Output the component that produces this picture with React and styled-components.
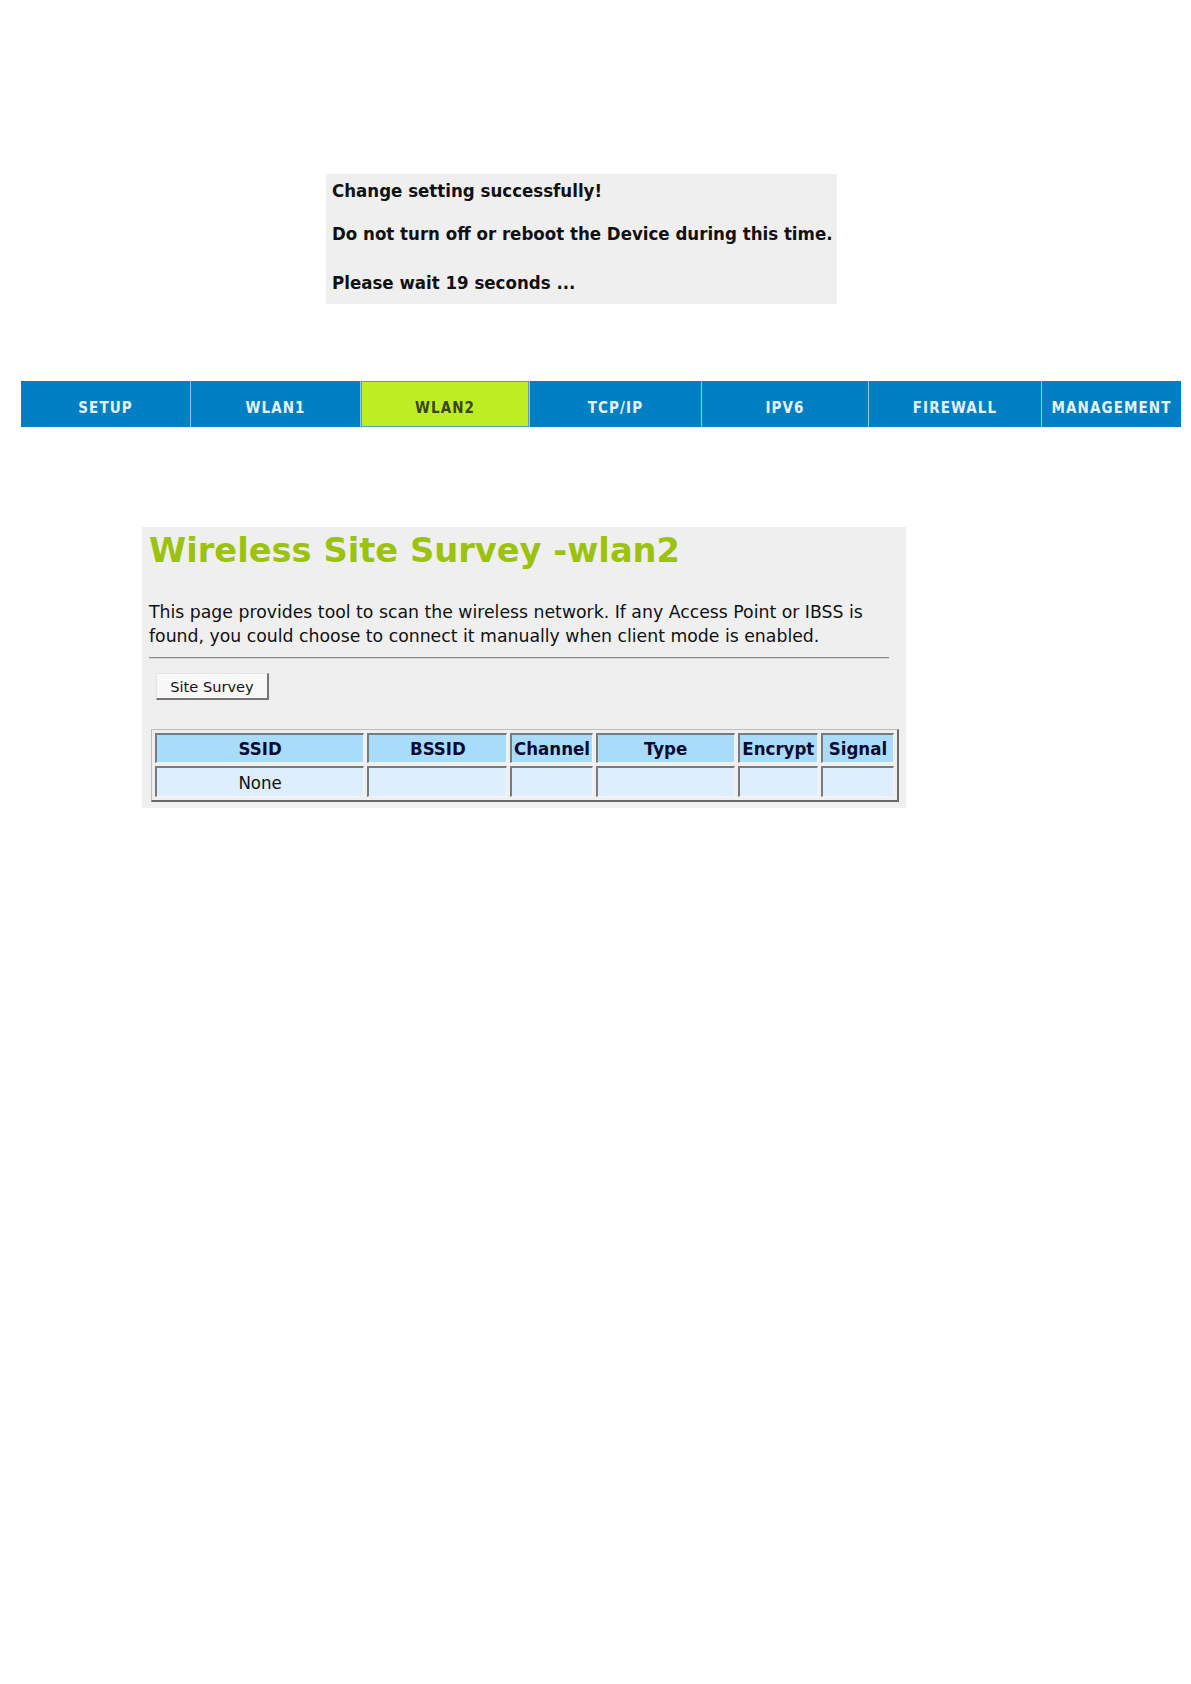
import React from "react";
import styled, { createGlobalStyle } from "styled-components";

const Global = createGlobalStyle`
  html, body { margin: 0; padding: 0; background: #ffffff; }
  body { font-family: "DejaVu Sans", "Liberation Sans", sans-serif; }
`;

const Page = styled.div`
  width: 1191px;
  min-height: 1684px;
  padding-top: 174px;
  box-sizing: border-box;
`;

const Notice = styled.div`
  margin-left: 326px;
  width: 511px;
  height: 130px;
  box-sizing: border-box;
  background: #efefef;
  padding: 7px 0 0 6px;
`;

const NoticeLine = styled.p`
  margin: 0 0 ${(p) => p.$gap || 0}px 0;
  font-family: "DejaVu Sans Condensed", "DejaVu Sans", sans-serif;
  font-stretch: condensed;
  font-weight: bold;
  font-size: 18.5px;
  line-height: 20px;
  color: #111;
  white-space: nowrap;
`;

const Nav = styled.div`
  margin: 77px 0 0 21px;
  width: 1160px;
  height: 46px;
  display: flex;
  background: #0080c2;
`;

const Tab = styled.div`
  width: ${(p) => p.$w}px;
  box-sizing: border-box;
  display: flex;
  align-items: center;
  justify-content: center;
  padding-top: 7px;
  background: ${(p) => (p.$active ? "#bdee24" : "#0080c2")};
  border-left: ${(p) => (p.$first ? "none" : "1px solid #8cc8ee")};
  box-shadow: ${(p) => (p.$active ? "inset 0 0 0 1px #5aa0b8" : "none")};
  color: ${(p) => (p.$active ? "#3a4520" : "#e6f2fb")};
  font-family: "DejaVu Sans Condensed", "DejaVu Sans", sans-serif;
  font-stretch: condensed;
  font-weight: bold;
  font-size: 15px;
  letter-spacing: 1.1px;
  white-space: nowrap;
`;

const Panel = styled.div`
  margin: 100px 0 0 142px;
  width: 764px;
  height: 281px;
  box-sizing: border-box;
  background: #efefef;
  padding: 4px 0 0 7px;
`;

const Title = styled.h1`
  margin: 0;
  font-family: "DejaVu Sans", sans-serif;
  font-weight: bold;
  font-size: 33.7px;
  line-height: 40px;
  color: #9bc20c;
  white-space: nowrap;
`;

const Desc = styled.p`
  margin: 29px 0 0 0;
  width: 745px;
  font-family: "DejaVu Sans", sans-serif;
  font-size: 17.3px;
  line-height: 24px;
  color: #111;
`;

const Rule = styled.hr`
  margin: 9px 0 0 0;
  width: 740px;
  height: 0;
  border: none;
  border-top: 1px solid #8a8a8a;
  border-bottom: 1px solid #d8d8d8;
`;

const Button = styled.button`
  display: block;
  margin: 14px 0 0 7px;
  width: 113px;
  height: 27px;
  box-sizing: border-box;
  background: #f8f8f8;
  border: 1px solid #e4e4e4;
  border-right: 2px solid #777;
  border-bottom: 2px solid #777;
  font-family: "DejaVu Sans", sans-serif;
  font-size: 14.6px;
  color: #111;
  padding: 0;
`;

const Table = styled.table`
  margin: 29px 0 0 2px;
  width: 748px;
  table-layout: fixed;
  border-collapse: separate;
  border-spacing: 3px;
  border-top: 1px solid #bdbdbd;
  border-left: 1px solid #bdbdbd;
  border-right: 2px solid #6a6a6a;
  border-bottom: 2px solid #6a6a6a;
`;

const Th = styled.th`
  height: 30px;
  box-sizing: border-box;
  padding: 0;
  background: #a9dcfb;
  border-top: 2px solid #7a7a7a;
  border-left: 2px solid #7a7a7a;
  border-right: 1px solid #f4f4f4;
  border-bottom: 1px solid #f4f4f4;
  font-family: "DejaVu Sans Condensed", "DejaVu Sans", sans-serif;
  font-stretch: condensed;
  font-weight: bold;
  font-size: 18.5px;
  color: #0a0a30;
  text-align: center;
  white-space: nowrap;
  overflow: hidden;
`;

const Td = styled.td`
  height: 31px;
  box-sizing: border-box;
  padding: 0;
  background: #ddeeff;
  border-top: 2px solid #7a7a7a;
  border-left: 2px solid #7a7a7a;
  border-right: 1px solid #f4f4f4;
  border-bottom: 1px solid #f4f4f4;
  font-family: "DejaVu Sans Condensed", "DejaVu Sans", sans-serif;
  font-stretch: condensed;
  font-size: 18.5px;
  color: #111;
  text-align: center;
`;

const tabs = [
  { label: "SETUP", w: 169 },
  { label: "WLAN1", w: 170 },
  { label: "WLAN2", w: 169, active: true },
  { label: "TCP/IP", w: 172 },
  { label: "IPV6", w: 167 },
  { label: "FIREWALL", w: 173 },
  { label: "MANAGEMENT", w: 140 },
];

const cols = [
  { label: "SSID", w: 209 },
  { label: "BSSID", w: 140 },
  { label: "Channel", w: 82 },
  { label: "Type", w: 139 },
  { label: "Encrypt", w: 80 },
  { label: "Signal", w: 73 },
];

export default function App() {
  return (
    <>
      <Global />
      <Page>
        <Notice>
          <NoticeLine $gap={23}>Change setting successfully!</NoticeLine>
          <NoticeLine $gap={29}>Do not turn off or reboot the Device during this time.</NoticeLine>
          <NoticeLine>Please wait 19 seconds ...</NoticeLine>
        </Notice>
        <Nav>
          {tabs.map((t, i) => (
            <Tab key={t.label} $w={t.w} $active={t.active} $first={i === 0}>
              {t.label}
            </Tab>
          ))}
        </Nav>
        <Panel>
          <Title>Wireless Site Survey -wlan2</Title>
          <Desc>
            This page provides tool to scan the wireless network. If any Access Point or IBSS is
            found, you could choose to connect it manually when client mode is enabled.
          </Desc>
          <Rule />
          <Button>Site Survey</Button>
          <Table>
            <colgroup>
              {cols.map((c) => (
                <col key={c.label} style={{ width: c.w }} />
              ))}
            </colgroup>
            <thead>
              <tr>
                {cols.map((c) => (
                  <Th key={c.label}>{c.label}</Th>
                ))}
              </tr>
            </thead>
            <tbody>
              <tr>
                <Td>None</Td>
                <Td />
                <Td />
                <Td />
                <Td />
                <Td />
              </tr>
            </tbody>
          </Table>
        </Panel>
      </Page>
    </>
  );
}
